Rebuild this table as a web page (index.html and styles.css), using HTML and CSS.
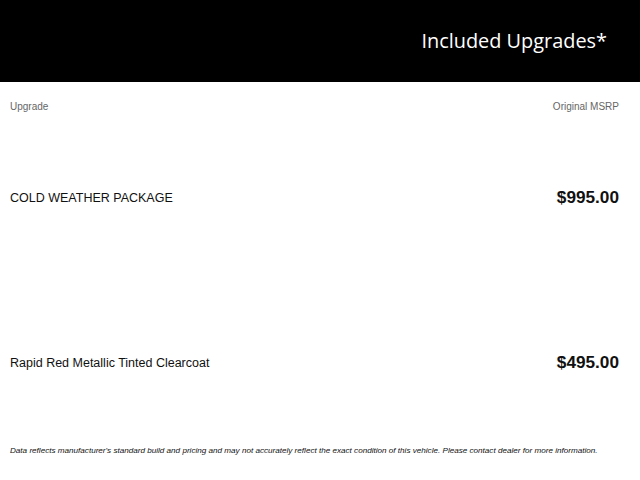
FILE: index.html
```html
<!DOCTYPE html>
<html>
<head>
<meta charset="utf-8">
<link rel="stylesheet" href="styles.css">
</head>
<body>
<header class="header">
  <h1 class="title">Included Upgrades*</h1>
</header>
<main class="content">
  <div class="head-row">
    <span>Upgrade</span>
    <span>Original MSRP</span>
  </div>
  <div class="row">
    <span class="name">COLD WEATHER PACKAGE</span>
    <span class="price">$995.00</span>
  </div>
  <div class="row">
    <span class="name">Rapid Red Metallic Tinted Clearcoat</span>
    <span class="price">$495.00</span>
  </div>
  <p class="note">Data reflects manufacturer's standard build and pricing and may not accurately reflect the exact condition of this vehicle. Please contact dealer for more information.</p>
</main>
</body>
</html>
```

FILE: styles.css
```css
html, body {
  margin: 0;
  padding: 0;
  background: #fff;
}
body {
  width: 640px;
  height: 480px;
  overflow: hidden;
  font-family: "Liberation Sans", Arial, sans-serif;
  color: #111;
}
.header {
  height: 82px;
  background: #000;
  display: flex;
  align-items: center;
  justify-content: flex-end;
  padding-right: 33px;
  box-sizing: border-box;
}
.title {
  margin: 0;
  color: #fff;
  font-family: "Open Sans", sans-serif;
  font-weight: 400;
  font-size: 19.9px;
  line-height: 1;
}
.content {
  padding: 0 21px 0 10px;
}
.head-row {
  display: flex;
  justify-content: space-between;
  padding-top: 17px;
  height: 33px;
  box-sizing: border-box;
  font-size: 10px;
  line-height: 16px;
  color: #666;
}
.row {
  height: 165px;
  display: flex;
  align-items: center;
  justify-content: space-between;
}
.name {
  font-size: 12.5px;
  color: #111;
}
.price {
  font-size: 17.2px;
  font-weight: 700;
  color: #111;
}
.note {
  margin: 0;
  font-size: 8.12px;
  font-style: italic;
  line-height: 12px;
  white-space: nowrap;
  color: #111;
}
```
